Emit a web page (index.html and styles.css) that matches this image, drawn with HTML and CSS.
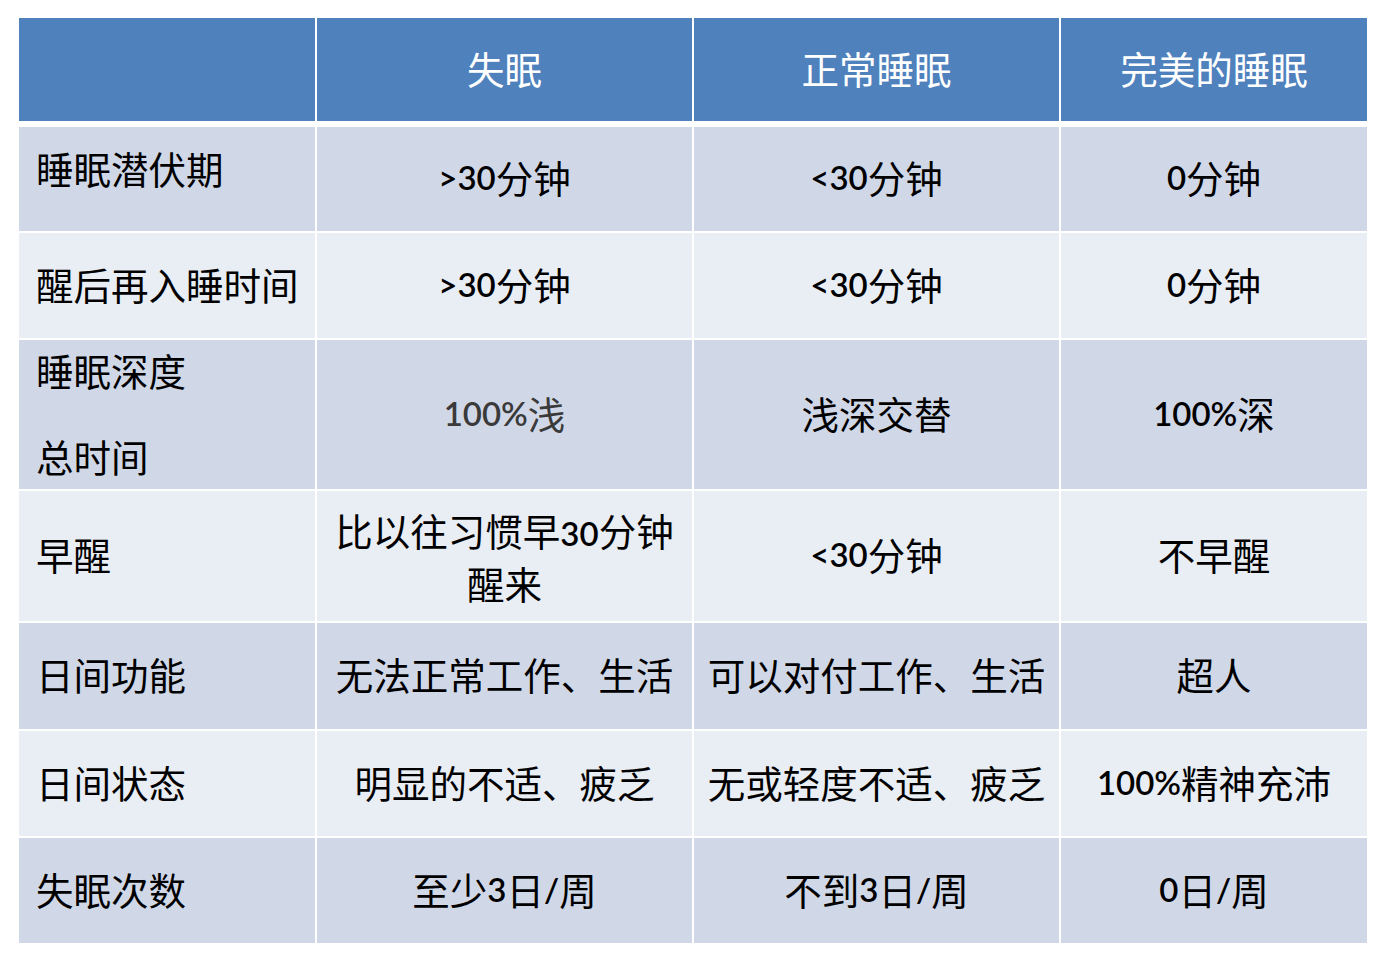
FILE: index.html
```html
<!DOCTYPE html>
<html lang="zh-CN">
<head>
<meta charset="utf-8">
<title>睡眠对比</title>
<link rel="stylesheet" href="styles.css">
</head>
<body>
<div class="table">
  <div class="row head">
    <div class="cell"></div>
    <div class="cell">失眠</div>
    <div class="cell">正常睡眠</div>
    <div class="cell">完美的睡眠</div>
  </div>
  <div class="row dark r1">
    <div class="cell label up">睡眠潜伏期</div>
    <div class="cell"><span class="n">&gt;30</span>分钟</div>
    <div class="cell"><span class="n">&lt;30</span>分钟</div>
    <div class="cell"><span class="n">0</span>分钟</div>
  </div>
  <div class="row light r2">
    <div class="cell label">醒后再入睡时间</div>
    <div class="cell"><span class="n">&gt;30</span>分钟</div>
    <div class="cell"><span class="n">&lt;30</span>分钟</div>
    <div class="cell"><span class="n">0</span>分钟</div>
  </div>
  <div class="row dark r3">
    <div class="cell label tall">睡眠深度<br>总时间</div>
    <div class="cell grey"><span class="n">100%</span>浅</div>
    <div class="cell">浅深交替</div>
    <div class="cell"><span class="n">100%</span>深</div>
  </div>
  <div class="row light r4">
    <div class="cell label">早醒</div>
    <div class="cell two">比以往习惯早<span class="n">30</span>分钟<br>醒来</div>
    <div class="cell"><span class="n">&lt;30</span>分钟</div>
    <div class="cell">不早醒</div>
  </div>
  <div class="row dark r5">
    <div class="cell label">日间功能</div>
    <div class="cell">无法正常工作、生活</div>
    <div class="cell">可以对付工作、生活</div>
    <div class="cell">超人</div>
  </div>
  <div class="row light r6">
    <div class="cell label">日间状态</div>
    <div class="cell">明显的不适、疲乏</div>
    <div class="cell">无或轻度不适、疲乏</div>
    <div class="cell"><span class="n">100%</span>精神充沛</div>
  </div>
  <div class="row dark r7">
    <div class="cell label">失眠次数</div>
    <div class="cell">至少<span class="n">3</span>日<span class="n">/</span>周</div>
    <div class="cell">不到<span class="n">3</span>日<span class="n">/</span>周</div>
    <div class="cell"><span class="n">0</span>日<span class="n">/</span>周</div>
  </div>
</div>
</body>
</html>
```
FILE: styles.css
```css
html, body {
  margin: 0;
  padding: 0;
  background: #ffffff;
}

body {
  font-family: "Noto Sans CJK SC", sans-serif;
  color: #000000;
}

.table {
  display: flex;
  flex-direction: column;
  gap: 2px;
  margin: 18px 0 0 19px;
  width: 1348px;
}

.row {
  display: grid;
  grid-template-columns: 296px 375px 365px 306px;
  grid-template-rows: minmax(0, 1fr);
  column-gap: 2px;
}

.cell {
  display: flex;
  align-items: center;
  justify-content: center;
  text-align: center;
  font-size: 37.5px;
  line-height: 50px;
  white-space: nowrap;
  min-height: 0;
  padding-bottom: 4px;
}

.cell.two {
  display: block;
  padding-top: 14px;
}

.n {
  font-family: Lato, "Noto Sans CJK SC", sans-serif;
  font-size: 33px;
  font-weight: 600;
}

.head {
  height: 103px;
  margin-bottom: 4px;
}

.head .cell {
  background: #4f81bd;
  color: #ffffff;
}

.dark .cell { background: #d0d8e8; }
.light .cell { background: #e9edf4; }

.r1 { height: 104px; }
.r2 { height: 105px; }
.r3 { height: 149px; }
.r4 { height: 130px; }
.r5 { height: 106px; }
.r6 { height: 105px; }
.r7 { height: 105px; }

.label {
  justify-content: flex-start;
  text-align: left;
  padding-left: 17px;
}

.label.up {
  padding-bottom: 22px;
}

.label.tall {
  line-height: 86px;
}

.grey {
  color: #3a3a3a;
}
```
